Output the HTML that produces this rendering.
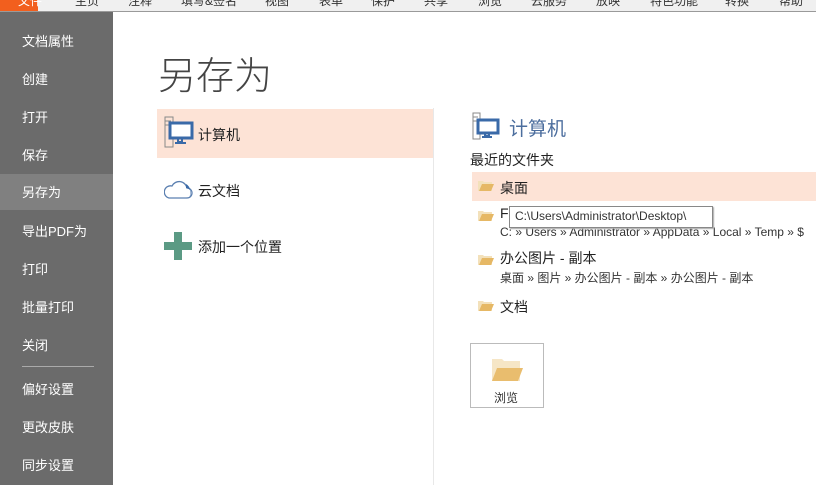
<!DOCTYPE html>
<html><head><meta charset="utf-8"><style>
*{margin:0;padding:0;box-sizing:border-box}
body{width:816px;height:485px;overflow:hidden;background:#fff;font-family:"Liberation Sans","Noto Sans CJK SC",sans-serif;position:relative;color:#222}
.a{position:absolute;white-space:nowrap}
#top{position:absolute;left:0;top:0;width:816px;height:12px;background:#f0f0f0;border-bottom:1px solid #9a9a9a;overflow:hidden}
#top span{position:absolute;top:-8px;font-size:12px;color:#333;white-space:nowrap}
#side{position:absolute;left:0;top:12px;width:113px;height:473px;background:#6b6b6b}
#side div{position:absolute;left:22px;font-size:13px;color:#fff;line-height:16px}
.fold{position:absolute;width:16px;height:12px}
</style></head><body>
<div id="top">
<div style="position:absolute;left:0;top:0;width:38px;height:12px;background:#f25f1e"></div>
<span style="left:18px;color:#fff">文件</span>
<span style="left:75px">主页</span><span style="left:128px">注释</span><span style="left:181px">填写&amp;签名</span><span style="left:265px">视图</span><span style="left:319px">表单</span><span style="left:371px">保护</span><span style="left:424px">共享</span><span style="left:478px">浏览</span><span style="left:531px">云服务</span><span style="left:596px">放映</span><span style="left:650px">特色功能</span><span style="left:725px">转换</span><span style="left:779px">帮助</span>
</div>
<div id="side">
<div style="top:22px">文档属性</div>
<div style="top:60px">创建</div>
<div style="top:98px">打开</div>
<div style="top:136px">保存</div>
<div style="left:0;top:162px;width:113px;height:36px;background:#808080"></div>
<div style="top:173px">另存为</div>
<div style="top:212px">导出PDF为</div>
<div style="top:250px">打印</div>
<div style="top:288px">批量打印</div>
<div style="top:326px">关闭</div>
<div style="top:354px;width:72px;height:1px;background:#aaa"></div>
<div style="top:370px">偏好设置</div>
<div style="top:408px">更改皮肤</div>
<div style="top:446px">同步设置</div>
</div>
<div class="a" style="left:158px;top:48px;font-size:38px;font-weight:300;color:#444;line-height:50px;font-family:'Noto Sans CJK SC',sans-serif">另存为</div>
<div class="a" style="left:433px;top:108px;width:1px;height:377px;background:#e8e8e8"></div>
<div class="a" style="left:157px;top:109px;width:276px;height:49px;background:#fde3d6"></div>
<svg class="a" style="left:164px;top:115px" width="30" height="34"><path d="M1 2h8v30H1z M1 6h6 M1 10h6" stroke="#888" fill="none"/><rect x="6" y="8" width="22" height="15" fill="#fff" stroke="#3a6aa8" stroke-width="3"/><path d="M14 24v3h4v-3M11 28h11" stroke="#3a6aa8" stroke-width="2" fill="none"/></svg>
<div class="a" style="left:198px;top:125px;font-size:14px">计算机</div>
<svg class="a" style="left:164px;top:178px" width="30" height="22"><path d="M5 20h18a5 5 0 0 0 0-10a8 8 0 0 0-15-2a6 6 0 0 0-3 12z" fill="#fff" stroke="#5a7fb0" stroke-width="1.3"/><path d="M22 6a7 7 0 0 1 4 7a5 5 0 0 1-3 7h-1a5 5 0 0 0 0-10z" fill="#3a6aa8"/></svg>
<div class="a" style="left:198px;top:181px;font-size:14px">云文档</div>
<svg class="a" style="left:164px;top:232px" width="28" height="28"><path d="M10 0h8v10h10v8H18v10h-8V18H0v-8h10z" fill="#5b9a84"/></svg>
<div class="a" style="left:198px;top:237px;font-size:14px">添加一个位置</div>
<svg class="a" style="left:472px;top:112px" width="30" height="28"><path d="M1 1h7v26H1z M1 5h5 M1 9h5" stroke="#888" fill="none"/><rect x="6" y="8" width="20" height="13" fill="#fff" stroke="#3a6aa8" stroke-width="3"/><path d="M13 22v2h4v-2M10 25h10" stroke="#3a6aa8" stroke-width="2" fill="none"/></svg>
<div class="a" style="left:509px;top:114px;font-size:19px;color:#4c6e9e">计算机</div>
<div class="a" style="left:470px;top:150px;font-size:14px">最近的文件夹</div>
<div class="a" style="left:472px;top:172px;width:344px;height:29px;background:#fde3d6"></div>
<svg width="0" height="0" style="position:absolute"><defs><g id="f"><path d="M0 1h5l1 1h8v9H0z" fill="#f3e1bb"/><path d="M1 11l3-7h12l-3 7z" fill="#e6b865"/></g></defs></svg>
<svg class="fold" style="left:478px;top:180px"><use href="#f"/></svg>
<div class="a" style="left:500px;top:178px;font-size:14px">桌面</div>
<svg class="fold" style="left:478px;top:210px"><use href="#f"/></svg>
<div class="a" style="left:500px;top:205px;font-size:14px">Fo</div>
<div class="a" style="left:500px;top:225px;font-size:12px;color:#333">C: » Users » Administrator » AppData » Local » Temp » $</div>
<div class="a" style="left:509px;top:206px;width:204px;height:22px;background:#fff;border:1px solid #888;box-shadow:1px 1px 1px #aaa;font-size:12px;padding:2px 0 0 5px;color:#333">C:\Users\Administrator\Desktop\</div>
<svg class="fold" style="left:478px;top:254px"><use href="#f"/></svg>
<div class="a" style="left:500px;top:248px;font-size:14px">办公图片 - 副本</div>
<div class="a" style="left:500px;top:269px;font-size:12px;color:#333">桌面 » 图片 » 办公图片 - 副本 » 办公图片 - 副本</div>
<svg class="fold" style="left:478px;top:300px"><use href="#f"/></svg>
<div class="a" style="left:500px;top:297px;font-size:14px">文档</div>
<div class="a" style="left:470px;top:343px;width:74px;height:65px;border:1px solid #bbb"></div>
<svg class="a" style="left:492px;top:358px" width="32" height="24"><path d="M0 1h10l2 2h16v20H0z" fill="#f6e6c6"/><path d="M0 23l5-13h26l-5 13z" fill="#e9bd6e"/></svg>
<div class="a" style="left:494px;top:389px;font-size:12px;color:#333">浏览</div>
</body></html>
